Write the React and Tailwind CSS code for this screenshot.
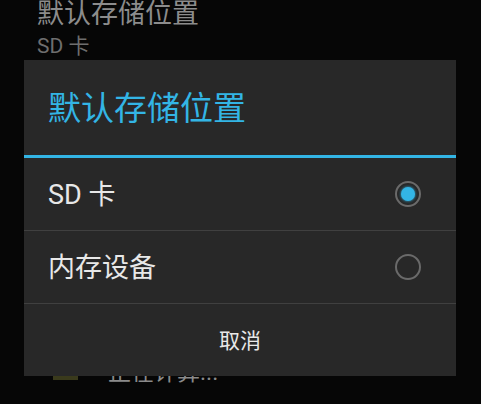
import React from "react";

const font = { fontFamily: 'Roboto, "Noto Sans CJK SC", sans-serif' };

function Radio({ checked }) {
  return (
    <div className="w-[26px] h-[26px] rounded-full border-2 border-[#6a6a6a] flex items-center justify-center shrink-0">
      {checked && (
        <div className="w-[14px] h-[14px] rounded-full bg-[#33b5e5] shadow-[0_0_3px_#33b5e5]" />
      )}
    </div>
  );
}

export default function App() {
  return (
    <div
      className="relative w-[481px] h-[404px] overflow-hidden bg-[#060606]"
      style={font}
    >
      <div className="pl-[37px] flex flex-col">
        <div className="text-[27px] leading-[32px] mt-[-2px] text-[#8c8c8c]">默认存储位置</div>
        <div className="text-[21px] leading-[26px] mt-[3px] text-[#6e6e6e]">SD 卡</div>
      </div>
      <div className="flex items-start mt-[299px] pl-[53px]">
        <div className="w-[25px] h-[14px] mt-[8px] bg-[#3a3a1c]" />
        <div className="ml-[30px] text-[23px] leading-[30px] text-[#8a8a8a]">正在计算...</div>
      </div>

      <div className="absolute left-[24px] top-[60px] w-[432px] h-[316px] bg-[#282828] flex flex-col">
        <div className="h-[95px] flex items-center pl-[24px] pt-[3px] text-[33px] text-[#33b5e5]">默认存储位置</div>
        <div className="h-[3px] bg-[#33b5e5]" />
        <div className="h-[72px] flex items-center justify-between pl-[24px] pr-[35px] text-[27px] text-[#e8e8e8]">
          <span className="pt-[3px]">SD 卡</span>
          <Radio checked />
        </div>
        <div className="h-[1px] bg-[#404040]" />
        <div className="h-[72px] flex items-center justify-between pl-[24px] pr-[35px] text-[27px] text-[#e8e8e8]">
          <span className="pt-[3px]">内存设备</span>
          <Radio />
        </div>
        <div className="h-[1px] bg-[#404040]" />
        <div className="flex-1 flex items-center justify-center pt-[4px] text-[21px] text-[#e8e8e8]">取消</div>
      </div>
    </div>
  );
}
